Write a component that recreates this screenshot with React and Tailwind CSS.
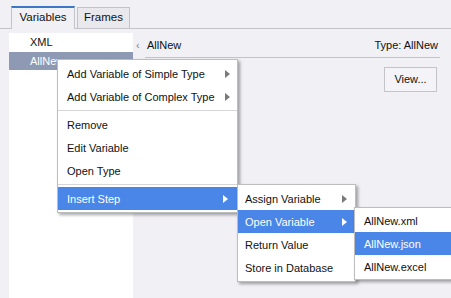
import React from "react";

const Arrow = ({ white }) => (
  <svg width="5" height="8" viewBox="0 0 5 8" className="shrink-0">
    <path d="M0 0 L5 4 L0 8 Z" fill={white ? "#ffffff" : "#7a7a7a"} />
  </svg>
);

const Item = ({ label, sub, active, pl = "pl-[9px]", pr = "pr-[7px]" }) => (
  <div
    className={`h-[23px] pt-px flex items-center justify-between whitespace-nowrap ${pl} ${pr} ${
      active ? "bg-[#4a86e8] text-white" : "text-[#111]"
    }`}
  >
    <span>{label}</span>
    {sub && <Arrow white={active} />}
  </div>
);

const Sep = () => <div className="h-[5px] flex items-center"><div className="h-px w-full bg-[#d6d6d6]" /></div>;

const App = () => {
  return (
    <div
      className="relative w-[451px] h-[298px] overflow-hidden bg-[#f1f0f5] text-[11px] text-[#111]"
      style={{ fontFamily: '"Liberation Sans", Arial, sans-serif' }}
    >
      {/* tabs */}
      <div className="flex items-end h-[29px] pl-[11px] border-b border-[#c4c4c8] text-[11.5px]">
        <div className="h-[23px] w-[64px] flex items-center justify-center bg-[#f1f0f5] border border-[#c4c4c8] border-t-2 border-t-[#3b78c8] border-b-0 -mb-px pb-px">
          Variables
        </div>
        <div className="h-[21px] w-[53px] ml-[2px] flex items-center justify-center bg-[#e9e9ed] border border-[#c4c4c8] border-b-0">
          Frames
        </div>
      </div>

      <div className="flex pt-[4px]">
        {/* list */}
        <div className="ml-[9px] w-[124px] h-[265px] bg-white">
          <div className="h-[19px] flex items-center pl-[21px]">XML</div>
          <div className="h-[18px] flex items-center pl-[21px] bg-[#8e9ab4] text-white">AllNew</div>
        </div>

        {/* details */}
        <div className="flex-1 pl-[3px] pr-[11px]">
          <div className="h-[24px] flex items-center pt-[1px]">
            <span className="text-[#888] w-[11px]">‹</span>
            <span className="flex-1">AllNew</span>
            <span className="pr-[2px]">Type: AllNew</span>
          </div>
          <div className="ml-[9px] h-px bg-[#c4c4c8]" />
          <div className="flex justify-end pt-[9px] pr-[3px]">
            <div className="w-[53px] h-[25px] flex items-center justify-center border border-[#c4c4c8] bg-[#f4f4f8]">
              View...
            </div>
          </div>
        </div>
      </div>

      {/* context menu */}
      <div className="absolute left-[57px] top-[59px] w-[181px] bg-white border border-[#bdbdbd] py-[2px] shadow-[2px_2px_3px_rgba(0,0,0,0.35)]">
        <Item label="Add Variable of Simple Type" sub />
        <Item label="Add Variable of Complex Type" sub />
        <Sep />
        <Item label="Remove" />
        <Item label="Edit Variable" />
        <Item label="Open Type" />
        <Sep />
        <Item label="Insert Step" sub active pr="pr-[9px]" />
      </div>

      {/* submenu */}
      <div className="absolute left-[237px] top-[184px] w-[119px] bg-white border border-[#bdbdbd] py-[2px] shadow-[2px_2px_3px_rgba(0,0,0,0.35)]">
        <Item label="Assign Variable" sub pl="pl-[7px]" pr="pr-[8px]" />
        <Item label="Open Variable" sub active pl="pl-[7px]" pr="pr-[8px]" />
        <Item label="Return Value" pl="pl-[7px]" />
        <Item label="Store in Database" pl="pl-[7px]" />
      </div>

      {/* sub-submenu */}
      <div className="absolute left-[354px] top-[207px] w-[110px] bg-white border border-[#bdbdbd] py-[1px] shadow-[2px_2px_3px_rgba(0,0,0,0.35)]">
        <Item label="AllNew.xml" pl="pl-[9px]" />
        <Item label="AllNew.json" active pl="pl-[9px]" />
        <Item label="AllNew.excel" pl="pl-[9px]" />
      </div>
    </div>
  );
};

export default App;
